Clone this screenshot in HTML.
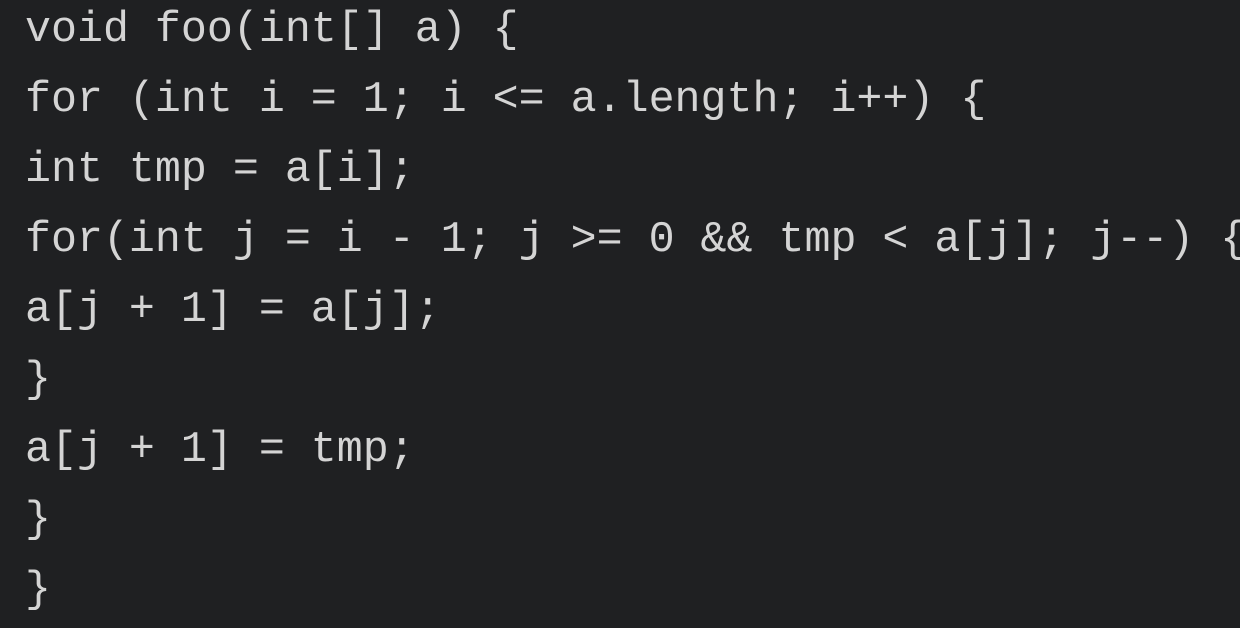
<!DOCTYPE html>
<html><head><meta charset="utf-8"><style>
html,body{margin:0;padding:0;background:#1f2022;width:1240px;height:628px;overflow:hidden}
pre{margin:0;padding:0 0 0 25px;position:relative;top:-4px;font-family:"Liberation Mono",monospace;font-size:43.3px;line-height:70px;color:#d4d4d4;white-space:pre}
</style></head><body><pre>void foo(int[] a) {
for (int i = 1; i &lt;= a.length; i++) {
int tmp = a[i];
for(int j = i - 1; j &gt;= 0 &amp;&amp; tmp &lt; a[j]; j--) {
a[j + 1] = a[j];
}
a[j + 1] = tmp;
}
}</pre></body></html>
